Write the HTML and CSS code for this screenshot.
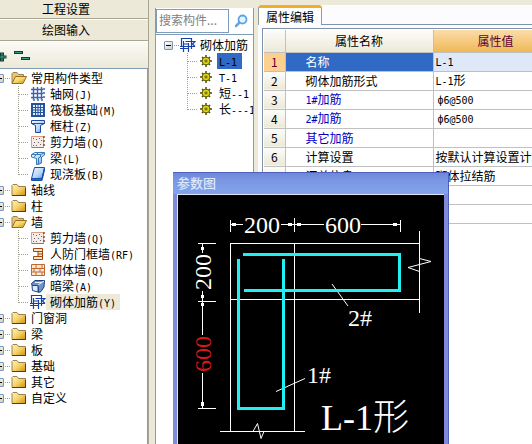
FILE: index.html
```html
<!DOCTYPE html>
<html lang="zh-CN">
<head>
<meta charset="utf-8">
<title>属性编辑</title>
<link rel="stylesheet" href="styles.css">
</head>
<body>
<svg class="defs" aria-hidden="true">
  <defs>
    <linearGradient id="gold" x1="0" y1="0" x2="1" y2="1"><stop offset="0" stop-color="#fff3b0"/><stop offset=".5" stop-color="#f5d468"/><stop offset="1" stop-color="#d08c10"/></linearGradient>
    <linearGradient id="blue" x1="0" y1="0" x2="1" y2="1"><stop offset="0" stop-color="#f4faff"/><stop offset=".6" stop-color="#b4d4fa"/><stop offset="1" stop-color="#4a86dc"/></linearGradient>
    <symbol id="folder" viewBox="0 0 16 16"><path d="M1 13.500V3.500L2 2.500H6L7.500 4.500H14.500V13.500Z" fill="url(#gold)" stroke="#9a8250"/><path d="M1 13.500H15M14.500 6V14" stroke="#5a3c10" fill="none"/></symbol>
    <symbol id="folder-open" viewBox="0 0 16 16"><path d="M1 13V3.500L2 2.500H6L7.500 4.500H12.500V7" fill="#e8c870" stroke="#9a8250"/><path d="M1 13.500L4.500 6.500H15.500L12 13.500Z" fill="url(#gold)" stroke="#9a6c20"/></symbol>
    <symbol id="axis" viewBox="0 0 16 16"><path d="M3.500 1V14M7.500 1V14M11.500 1V14M1 3.500H13M1 7.500H13M1 11.500H13" stroke="#3c62b0" stroke-width="1.400" fill="none"/><path d="M13 2h2v2h-2zM13 6h2v2h-2zM13 10h2v2h-2zM3 13h2v2H3zM7 13h2v2H7zM11 13h2v2h-2z" fill="#6888c8"/></symbol>
    <symbol id="raft" viewBox="0 0 16 16"><path d="M1 1H15V15H1Z" fill="#24549c"/><path d="M3 3H13V13H3Z" fill="#e4f0ff"/><path d="M5.500 3V13M8 3V13M10.500 3V13M3 5.500H13M3 8H13M3 10.500H13" stroke="#24549c"/></symbol>
    <symbol id="column" viewBox="0 0 16 16"><path d="M1.500 2.500H14.500V5.500L10.500 7.500V14.500H5.500V7.500L1.500 5.500Z" fill="url(#blue)" stroke="#1c4ca0"/><path d="M1.500 5.500H14.500" stroke="#1c4ca0"/></symbol>
    <symbol id="shear" viewBox="0 0 16 16"><path d="M1.500 2.500H13.500V13.500H1.500Z" fill="#f4ece8" stroke="#d8a080"/><path d="M3 4h1v1H3zM6 5h1v1H6zM9 4h1v1H9zM4 8h1v1H4zM8 8h1v1H8zM6 11h1v1H6zM10 10h1v1h-1zM3 11h1v1H3zM11 6h1v1h-1z" fill="#706468"/><path d="M14 2V14" stroke="#a04818" stroke-width="1.500" stroke-dasharray="2 2"/><path d="M2 13.500H14" stroke="#c07040"/></symbol>
    <symbol id="beam" viewBox="0 0 16 16"><path d="M1.500 4.500L5 2.500H14.500V5L11.500 7V13L8.500 14.500H6.500V8.500L1.500 7Z" fill="url(#blue)" stroke="#3878b8"/><path d="M2 4.500H10.500L14 3M10.500 4.500V7L8.500 8V14M4 7L8 3" stroke="#3878b8" fill="none"/></symbol>
    <symbol id="slab" viewBox="0 0 16 16"><path d="M4.500 1.500H14.500L12 12.500H1.500Z" fill="url(#blue)" stroke="#1850a8"/><path d="M1.500 12.500V14.500H12L14.500 4V2L12 12.500Z" fill="#2868c8" stroke="#1850a8"/></symbol>
    <symbol id="doorframe" viewBox="0 0 16 16"><path d="M3.500 2.500H12.500V13.500H3.500V10.500H8V5.500H3.500Z" fill="#fbe4c8" stroke="#a04810"/><path d="M8 5.500H12M8 8H12M8 10.500H12" stroke="#a04810"/></symbol>
    <symbol id="brick" viewBox="0 0 16 16"><path d="M1.500 2.500H14.500V13.500H1.500Z" fill="#fde8d4" stroke="#c06830"/><path d="M1 6.500H15M1 10H15M6 2V6.500M12 2V6.500M4 6.500V10M10 6.500V10M6 10V14M12 10V14" stroke="#c06830" fill="none"/></symbol>
    <symbol id="hidden-beam" viewBox="0 0 16 16"><path d="M1.500 5.500L5 2.500H14.500L14 9L11 13.500L8.500 14.500L8 7.500L2 7.500Z" fill="#6c94cc" stroke="#1c3c78"/><path d="M2 7.500H8V14L2.500 12.500Z" fill="#dcecfc" stroke="#244888"/><path d="M8 7L14 3M5 4.500H12" stroke="#e8f2ff" fill="none"/></symbol>
    <symbol id="rebar" viewBox="0 0 16 16"><path d="M1 1.500H11.500V12M1.500 1V10M0 9.500H15M5.500 4.500H15L12.500 7L15 9.500M3.500 4V15M8.500 6V15M0 11.500H9M4 7H9" stroke="#1440a8" stroke-width="1.200" fill="none"/></symbol>
    <symbol id="gear" viewBox="0 0 12 12"><path d="M6 0V12M0 6H12M2 2L10 10M10 2L2 10" stroke="#4c4800" stroke-width="1.500"/><circle cx="6" cy="6" r="3.800" fill="#f4ec20" stroke="#4c4800"/><path d="M6 2V10M2 6H10M3.500 3.500L8.500 8.500M8.500 3.500L3.500 8.500" stroke="#b4a808" stroke-width=".6"/><circle cx="6" cy="6" r="1" fill="#fff" stroke="#4c4800"/></symbol>
  </defs>
</svg>

<main class="app">
  <nav class="modules">
    <button class="section">工程设置</button>
    <button class="section input-section">绘图输入</button>
    <div class="tools">
      <button class="tool" aria-label="展开"><svg width="7" height="12" viewBox="0 0 7 12"><path d="M0 4.500H6.500V7.500H0ZM0 1.500H4V10.500H0Z" fill="#143c34"/><path d="M0 6H6M2 2V10" stroke="#389c80"/></svg></button>
      <button class="tool" aria-label="折叠"><svg width="17" height="12" viewBox="0 0 17 12"><path d="M0 0H9V3H0ZM7 6H16V9H7Z" fill="#143c34"/><path d="M1 1.500H8M8 7.500H15" stroke="#389c80"/></svg></button>
    </div>
    <div class="tree-box">
    <ul class="tree">
      <li><div class="row"><button class="expander" aria-label="折叠"></button><svg class="icon"><use href="#folder-open"/></svg><button class="label">常用构件类型</button></div>
        <ul>
          <li class="row"><svg class="icon"><use href="#axis"/></svg><button class="label">轴网<span class="key">(J)</span></button></li>
          <li class="row"><svg class="icon"><use href="#raft"/></svg><button class="label">筏板基础<span class="key">(M)</span></button></li>
          <li class="row"><svg class="icon"><use href="#column"/></svg><button class="label">框柱<span class="key">(Z)</span></button></li>
          <li class="row"><svg class="icon"><use href="#shear"/></svg><button class="label">剪力墙<span class="key">(Q)</span></button></li>
          <li class="row"><svg class="icon"><use href="#beam"/></svg><button class="label">梁<span class="key">(L)</span></button></li>
          <li class="row"><svg class="icon"><use href="#slab"/></svg><button class="label">现浇板<span class="key">(B)</span></button></li>
        </ul></li>
      <li><div class="row"><button class="expander" aria-label="展开"></button><svg class="icon"><use href="#folder"/></svg><button class="label">轴线</button></div></li>
      <li><div class="row"><button class="expander" aria-label="展开"></button><svg class="icon"><use href="#folder"/></svg><button class="label">柱</button></div></li>
      <li><div class="row"><button class="expander" aria-label="折叠"></button><svg class="icon"><use href="#folder-open"/></svg><button class="label">墙</button></div>
        <ul>
          <li class="row"><svg class="icon"><use href="#shear"/></svg><button class="label">剪力墙<span class="key">(Q)</span></button></li>
          <li class="row"><svg class="icon"><use href="#doorframe"/></svg><button class="label">人防门框墙<span class="key">(RF)</span></button></li>
          <li class="row"><svg class="icon"><use href="#brick"/></svg><button class="label">砌体墙<span class="key">(Q)</span></button></li>
          <li class="row"><svg class="icon"><use href="#hidden-beam"/></svg><button class="label">暗梁<span class="key">(A)</span></button></li>
          <li class="row"><svg class="icon"><use href="#rebar"/></svg><button class="label current">砌体加筋<span class="key">(Y)</span></button></li>
        </ul></li>
      <li><div class="row"><button class="expander" aria-label="展开"></button><svg class="icon"><use href="#folder"/></svg><button class="label">门窗洞</button></div></li>
      <li><div class="row"><button class="expander" aria-label="展开"></button><svg class="icon"><use href="#folder"/></svg><button class="label">梁</button></div></li>
      <li><div class="row"><button class="expander" aria-label="展开"></button><svg class="icon"><use href="#folder"/></svg><button class="label">板</button></div></li>
      <li><div class="row"><button class="expander" aria-label="展开"></button><svg class="icon"><use href="#folder"/></svg><button class="label">基础</button></div></li>
      <li><div class="row"><button class="expander" aria-label="展开"></button><svg class="icon"><use href="#folder"/></svg><button class="label">其它</button></div></li>
      <li><div class="row"><button class="expander" aria-label="展开"></button><svg class="icon"><use href="#folder"/></svg><button class="label">自定义</button></div></li>
    </ul>
    </div>
  </nav>

  <section class="components">
    <div class="search">
      <input type="text" placeholder="搜索构件..." aria-label="搜索构件">
      <button class="find" aria-label="搜索"><svg width="14" height="14" viewBox="0 0 14 14"><path d="M2 12L5.500 8.500" stroke="#68a4e0" stroke-width="2.500" stroke-linecap="round"/><circle cx="8.500" cy="5.500" r="4" fill="#e4f4ff" stroke="#58a4e4" stroke-width="1.800"/></svg></button>
    </div>
    <div class="tree-box">
    <ul class="tree small">
      <li><div class="row"><button class="expander" aria-label="折叠"></button><svg class="icon"><use href="#rebar"/></svg><button class="label">砌体加筋</button></div>
        <ul>
          <li class="row"><svg class="icon gear"><use href="#gear"/></svg><button class="label selected"><span class="key">L-1</span></button></li>
          <li class="row"><svg class="icon gear"><use href="#gear"/></svg><button class="label"><span class="key">T-1</span></button></li>
          <li class="row"><svg class="icon gear"><use href="#gear"/></svg><button class="label">短<span class="key">--1</span></button></li>
          <li class="row"><svg class="icon gear"><use href="#gear"/></svg><button class="label">长<span class="key">---1</span></button></li>
        </ul></li>
    </ul>
    </div>
  </section>

  <section class="properties">
    <div class="tabs"><button class="tab">属性编辑</button><span class="tab-rest"></span></div>
    <div class="sheet">
      <table>
        <colgroup><col class="num"><col class="name"><col class="value"></colgroup>
        <thead><tr><th></th><th>属性名称</th><th class="active">属性值</th></tr></thead>
        <tbody>
          <tr class="picked"><th>1</th><td>名称</td><td><span class="key">L-1</span></td></tr>
          <tr><th>2</th><td>砌体加筋形式</td><td><span class="key">L-1</span>形</td></tr>
          <tr class="extra"><th>3</th><td><span class="key">1#</span>加筋</td><td><span class="key">ф6@500</span></td></tr>
          <tr class="extra"><th>4</th><td><span class="key">2#</span>加筋</td><td><span class="key">ф6@500</span></td></tr>
          <tr class="extra"><th>5</th><td>其它加筋</td><td></td></tr>
          <tr><th>6</th><td>计算设置</td><td>按默认计算设置计算</td></tr>
          <tr><th>7</th><td>汇总信息</td><td>砌体拉结筋</td></tr>
          <tr><th>8</th><td></td><td></td></tr>
          <tr><th>9</th><td></td><td></td></tr>
        </tbody>
      </table>
    </div>
  </section>
</main>

<section class="dialog" role="dialog" aria-labelledby="dialog-title">
  <h2 id="dialog-title">参数图</h2>
  <div class="canvas">
    <svg class="drawing" viewBox="178 195 266 249" width="266" height="249">
      <g class="line">
        <path d="M230.500 220V232M230 224.500H243M281 224.500H294M294.500 218V232M294 224.500H324M361 224.500H400M400.500 220V232"/>
        <path d="M198 243.500H216M198 301.500H216M198 408.500H216M202.500 243V253M202.500 291V335M202.500 373V408"/>
        <path d="M230.500 431V243.500H419M230 299.500H419M294.500 243V431M419.500 231V313M220 431.500H305"/>
      </g>
      <g class="thin">
        <path d="M419.500 258.500L431 261.500L408 267.500L419.500 271.500M253 431.500L257.500 423.500L261 438.500L264 431.500M332 284L348 306M276 391.500L305 378.500"/>
      </g>
      <path class="mark" d="M232 223h4v3h-4zM288 223h4v3h-4zM297 223h4v3h-4zM393 223h4v3h-4zM201 247h3v3h-3zM201 295h3v3h-3zM201 303h3v3h-3zM201 402h3v4h-3z"/>
      <path class="bar" d="M243 254.500H399.500V290.500H244M238.500 259V408.500H283.500V259"/>
      <text x="244" y="233">200</text>
      <text x="325" y="233">600</text>
      <text transform="translate(211 290) rotate(-90)">200</text>
      <text class="red" transform="translate(211 372) rotate(-90)">600</text>
      <text x="348" y="326">2#</text>
      <text x="307" y="383">1#</text>
      <text class="big" x="321" y="430">L-1形</text>
    </svg>
  </div>
</section>
</body>
</html>
```

FILE: styles.css
```css
* { box-sizing: border-box; }

body {
  margin: 0;
  height: 100vh;
  overflow: hidden;
  background: #ece9d8;
  color: #000;
  font: 12px/16px "Noto Sans CJK SC", sans-serif;
}

button, input {
  margin: 0;
  padding: 0;
  border: 0;
  background: none;
  color: inherit;
  font: inherit;
}

ul { margin: 0; padding: 0; list-style: none; }

.defs { position: absolute; width: 0; height: 0; }

.key { font: 10px/16px "DejaVu Sans Mono", monospace; }

.app { display: flex; height: 100%; }

/* Module navigation */
.modules {
  display: flex;
  flex-direction: column;
  flex: 0 0 149px;
  min-height: 0;
  border-right: 1px solid #a8a594;
}

.section {
  flex: none;
  height: 19px;
  padding-right: 16px;
  border-bottom: 1px solid #a8a594;
}

.input-section { height: 22px; border-top: 1px solid #fff; }

.tools {
  display: flex;
  align-items: center;
  gap: 7px;
  flex: none;
  height: 27px;
  padding-top: 4px;
  border-top: 1px solid #fff;
  background: linear-gradient(#fbfaf6, #ece9d8);
}

.tool { height: 12px; line-height: 0; }
.tool svg { display: block; }

.tree-box {
  flex: 1;
  min-height: 0;
  overflow: hidden;
  border: solid #7f9db9;
  border-width: 1px 1px 0 0;
  background: #fff;
}

/* Trees */
.tree { margin: 1px 0 0 -5px; }
.tree ul { margin-left: 23px; }
.row { display: flex; align-items: center; height: 16px; }

.row::before {
  content: "";
  flex: none;
  width: 10px;
  margin-right: 2px;
  border-top: 1px dotted #a0a090;
}

div.row::before { order: 1; width: 5px; margin: 0 1px; }
.row .icon, .row .label { order: 2; }

li.row { background: repeating-linear-gradient(#a0a090 0 1px, transparent 1px 2px) 0 0 / 1px 16px no-repeat; }
li.row:last-child { background-size: 1px 8px; }

.expander {
  position: relative;
  flex: none;
  width: 9px;
  height: 9px;
  border: 1px solid #7b98b8;
  border-radius: 1px;
  background: linear-gradient(135deg, #fff, #d0ccc0);
}

.expander::after {
  content: "";
  position: absolute;
  inset: 3px 1px;
  background: #000;
}

.icon { flex: none; width: 16px; height: 16px; }
.label { height: 16px; padding: 0 4px; white-space: nowrap; text-align: left; }
.current { background: #ece9d8; }

/* Component list */
.components {
  display: flex;
  flex-direction: column;
  flex: 0 0 99px;
  min-width: 0;
  min-height: 0;
  margin: 8px 0 0 6px;
  overflow: hidden;
  border: solid #7f9db9;
  border-width: 0 1px 0 1px;
  background: #fff;
}

.search { display: flex; align-items: center; flex: none; height: 26px; }

.search input {
  width: 73px;
  height: 24px;
  padding: 0 2px 3px;
  border: 1px solid #7f9db9;
}

.search input::placeholder { color: #808080; opacity: 1; }
.find { flex: 1; height: 14px; line-height: 0; }

.components .tree-box { border-width: 1px 0 0; }
.tree.small { margin: 2px 0 0 8px; }
.small ul { margin-left: 23px; }
.gear { width: 12px; height: 12px; margin: 0 5px 0 1px; }
.small ul .label { padding: 0 2px; }
.small .selected { width: 25px; background: #316ac5; }

/* Property sheet */
.properties {
  display: flex;
  flex-direction: column;
  flex: 1;
  min-width: 0;
  margin: 5px 0 0 4px;
  background: #fcfcfe;
}

.tabs { display: flex; flex: none; height: 20px; }

.tab {
  flex: none;
  width: 64px;
  border: solid #919b9c;
  border-width: 3px 1px 0;
  border-top-color: #f5ac28;
  border-radius: 3px 3px 0 0;
  background: #fff;
}

.tab-rest { flex: 1; border-bottom: 1px solid #7f93ac; }

.sheet {
  flex: 1;
  min-height: 0;
  margin: 3px 0 0 4px;
  padding: 1px 0 0 1px;
  overflow: hidden;
  border: solid #7f93ac;
  border-width: 1px 0 0 1px;
  background: #fff;
}

table { width: 294px; border-collapse: collapse; table-layout: fixed; }
.num { width: 21px; }
.name { width: 148px; }
.value { width: 125px; }

th, td {
  height: 19px;
  padding: 0;
  border: solid #c0c0c0;
  border-width: 0 1px 1px 0;
  font-weight: 400;
  white-space: nowrap;
  overflow: hidden;
  line-height: 16px;
}

th { background: linear-gradient(#fcfcfa, #ece9d8); }
thead th { height: 22px; }
thead .active { background: linear-gradient(#fbdcaa, #f0b856); color: #600030; }
td { padding-left: 20px; }
td:last-child { padding-left: 2px; }
.extra td { color: #0000c0; }
.extra td:last-child { padding-left: 4px; color: #000; }
.picked th { background: #fcd090; color: #600030; }
.picked td { background: #316ac5; color: #fff; }
.picked td:last-child { background: #dfe8f6; color: #000; }

/* Floating parameter drawing */
.dialog {
  position: absolute;
  left: 173px;
  top: 172px;
  bottom: 0;
  width: 276px;
  padding: 0 4px;
  overflow: hidden;
  border: solid #5060b8;
  border-width: 1px 1px 0 0;
  background: #7f8bd8;
}

.dialog h2 {
  height: 21px;
  margin: 0 -4px;
  padding: 2px 4px;
  background: linear-gradient(#6c88dc, #7c98e4 40%, #82a4ec);
  color: #dce8fc;
  font-size: 13px;
  font-weight: 500;
}

.canvas { border: solid #e0e4f8; border-width: 1px 0 0 1px; background: #000; }
.drawing { display: block; }

.line { fill: none; stroke: #fff; stroke-width: 1; shape-rendering: crispEdges; }
.thin { fill: none; stroke: #fff; stroke-width: 1; }
.mark { fill: #fff; }
.bar { fill: none; stroke: #20f0f4; stroke-width: 3; }

.drawing text {
  fill: #fff;
  font-family: "Liberation Serif", "Noto Sans CJK SC", serif;
  font-size: 24px;
}

.drawing .red { fill: #d81818; }
.drawing .big { font-size: 36px; font-weight: 300; }
```
